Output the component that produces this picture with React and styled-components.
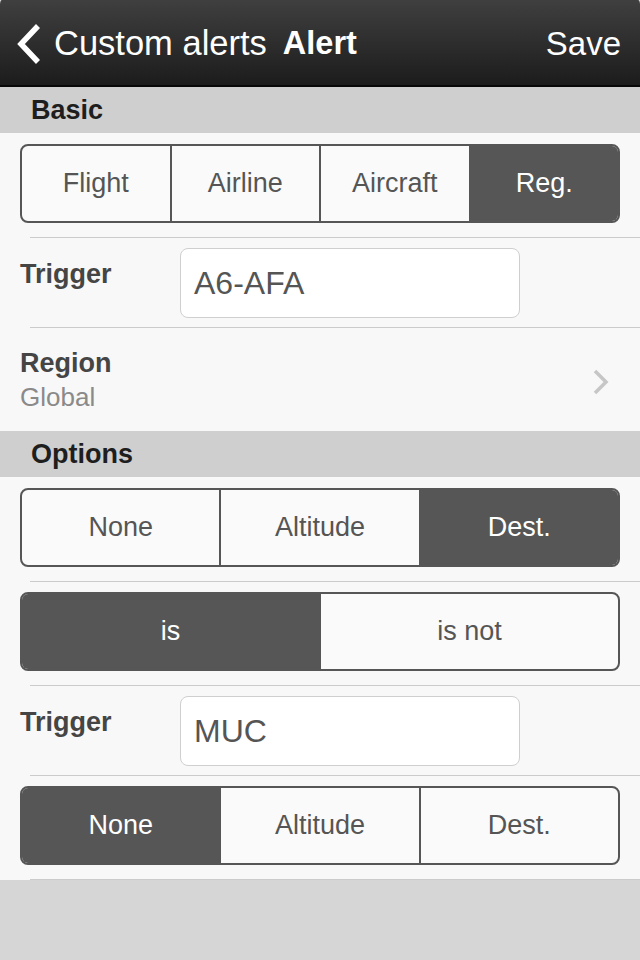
import React from "react";
import styled, { createGlobalStyle } from "styled-components";

const GlobalStyle = createGlobalStyle`
  html, body {
    margin: 0;
    padding: 0;
    background: #d6d6d6;
    font-family: "Liberation Sans", Arial, sans-serif;
  }
`;

function Segments({ items, active }) {
    return (
        <SegmentBar>
            {items.map((item, i) => (
                <Segment key={item} $active={i === active}>{item}</Segment>
            ))}
        </SegmentBar>
    )
}

function App() {
    return (
        <Screen>
            <GlobalStyle />
            <NavBar>
                <BackButton>
                    <svg width="28" height="42" viewBox="0 0 28 42">
                        <polyline points="23,3 6,21 23,39" fill="none" stroke="#fff" strokeWidth="5.5" />
                    </svg>
                    <BackText>Custom alerts</BackText>
                    <Title>Alert</Title>
                </BackButton>
                <Save>Save</Save>
            </NavBar>

            <SectionHeader>Basic</SectionHeader>
            <Content>
                <SegmentRow>
                    <Segments items={["Flight", "Airline", "Aircraft", "Reg."]} active={3} />
                </SegmentRow>
                <Line />
                <FieldRow>
                    <FieldLabel>Trigger</FieldLabel>
                    <Input>A6-AFA</Input>
                </FieldRow>
                <Line />
                <RegionRow>
                    <div>
                        <Label>Region</Label>
                        <Sub>Global</Sub>
                    </div>
                    <svg width="18" height="28" viewBox="0 0 18 28">
                        <polyline points="3,3 14,14 3,25" fill="none" stroke="#c6c6c6" strokeWidth="3.5" />
                    </svg>
                </RegionRow>
            </Content>

            <SectionHeader>Options</SectionHeader>
            <Content>
                <SegmentRow>
                    <Segments items={["None", "Altitude", "Dest."]} active={2} />
                </SegmentRow>
                <Line />
                <SegmentRow>
                    <Segments items={["is", "is not"]} active={0} />
                </SegmentRow>
                <Line />
                <FieldRow>
                    <FieldLabel>Trigger</FieldLabel>
                    <Input>MUC</Input>
                </FieldRow>
                <Line />
                <SegmentRow>
                    <Segments items={["None", "Altitude", "Dest."]} active={0} />
                </SegmentRow>
                <Line />
            </Content>
        </Screen>
    )
}

const Screen = styled.div`
    width: 640px;
    min-height: 960px;
    background: #d6d6d6;
`

const NavBar = styled.header`
    height: 83px;
    display: flex;
    align-items: center;
    justify-content: space-between;
    padding: 4px 19px 0 15px;
    background: linear-gradient(#404040, #1c1c1c);
    border-bottom: 2px solid #080808;
    border-radius: 6px 6px 0 0;
    color: #fff;
    margin-top: -2px;
`

const BackButton = styled.div`
    display: flex;
    align-items: center;
    gap: 11px;
`

const BackText = styled.span`
    font-size: 34.5px;
`

const Title = styled.span`
    font-size: 32.5px;
    font-weight: 700;
    margin-left: 5px;
`

const Save = styled.span`
    font-size: 33px;
`

const SectionHeader = styled.h2`
    margin: 0;
    height: 46px;
    display: flex;
    align-items: center;
    padding-left: 31px;
    background: #cfcfcf;
    color: #1e1e1e;
    font-size: 27px;
    font-weight: 700;
`

const Content = styled.section`
    background: #f8f8f8;
    padding-top: 1px;
`

const SegmentRow = styled.div`
    padding: 10px 20px 14px;
`

const SegmentBar = styled.div`
    display: flex;
    height: 79px;
    box-sizing: border-box;
    border: 2px solid #565656;
    border-radius: 8px;
    overflow: hidden;
    background: #fafafa;
`

const Segment = styled.div`
    flex: 1;
    display: flex;
    align-items: center;
    justify-content: center;
    font-size: 27px;
    color: ${p => (p.$active ? "#fff" : "#555")};
    background: ${p => (p.$active ? "#565656" : "transparent")};
    & + & {
        border-left: 2px solid #565656;
    }
`

const Line = styled.hr`
    margin: 0 0 0 30px;
    border: 0;
    height: 1px;
    background: #cbcbcb;
`

const FieldRow = styled.div`
    height: 89px;
    display: flex;
    align-items: flex-start;
    padding: 10px 20px 0;
    box-sizing: border-box;
`

const Label = styled.div`
    font-size: 27px;
    font-weight: 700;
    color: #454545;
    line-height: 32px;
`

const FieldLabel = styled(Label)`
    width: 160px;
    padding-top: 10px;
`

const Input = styled.div`
    width: 340px;
    height: 70px;
    box-sizing: border-box;
    border: 1px solid #cfcfcf;
    border-radius: 8px;
    background: #fff;
    display: flex;
    align-items: center;
    padding-left: 13px;
    font-size: 32px;
    color: #555;
`

const RegionRow = styled.div`
    height: 103px;
    display: flex;
    align-items: center;
    justify-content: space-between;
    padding: 0 30px 0 20px;
    svg {
        margin-top: 4px;
    }
`

const Sub = styled.div`
    font-size: 26px;
    line-height: 32px;
    color: #8a8a8a;
    margin-top: 2px;
`

export default App
